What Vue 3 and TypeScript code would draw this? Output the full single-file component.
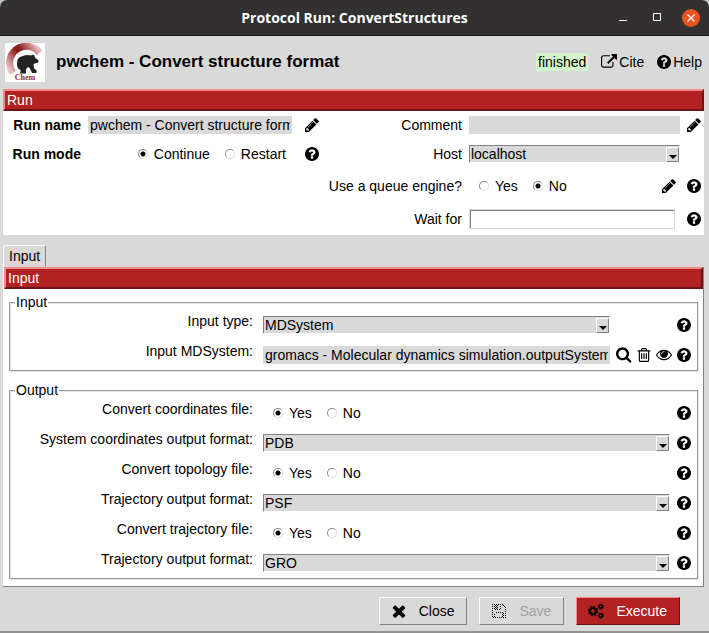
<script setup lang="ts">
import { reactive, ref } from 'vue'

interface FormRow {
  id: string
  label: string
  kind: 'choice' | 'select'
}

const icons = {
  help: 'M1024 1376v-192q0-14-9-23t-23-9h-192q-14 0-23 9t-9 23v192q0 14 9 23t23 9h192q14 0 23-9t9-23zm256-672q0-88-55.5-163t-138.5-116-170-41q-243 0-371 213-15 24 8 42l132 100q7 6 19 6 16 0 25-12 53-68 86-92 34-24 86-24 48 0 85.5 26t37.5 59q0 38-20 61t-68 45q-63 28-115.5 86.5t-52.5 125.5v36q0 14 9 23t23 9h192q14 0 23-9t9-23q0-19 21.5-49.5t54.5-49.5q32-18 49-28.5t46-35 44.5-48 28-60.5 12.5-81zm384 192q0 209-103 385.5t-279.5 279.5-385.5 103-385.5-103-279.5-279.5-103-385.5 103-385.5 279.5-279.5 385.5-103 385.5 103 279.5 279.5 103 385.5z',
  pencil: 'M491 1536l91-91-235-235-91 91v107h128v128h107zm523-928q0-22-22-22-10 0-17 7l-542 542q-7 7-7 17 0 22 22 22 10 0 17-7l542-542q7-7 7-17zm-54-192l416 416-832 832h-416v-416zm683 96q0 53-37 90l-166 166-416-416 166-165q36-38 90-38 53 0 91 38l235 234q37 39 37 91z',
  search: 'M1216 832q0-185-131.5-316.5t-316.5-131.5-316.5 131.5-131.5 316.5 131.5 316.5 316.5 131.5 316.5-131.5 131.5-316.5zm512 832q0 52-38 90t-90 38q-54 0-90-38l-343-342q-179 124-399 124-143 0-273.5-55.5t-225-150-150-225-55.5-273.5 55.5-273.5 150-225 225-150 273.5-55.5 273.5 55.5 225 150 150 225 55.5 273.5q0 220-124 399l343 343q37 37 37 90z',
  trash: 'M704 736v576q0 14-9 23t-23 9h-64q-14 0-23-9t-9-23v-576q0-14 9-23t23-9h64q14 0 23 9t9 23zm256 0v576q0 14-9 23t-23 9h-64q-14 0-23-9t-9-23v-576q0-14 9-23t23-9h64q14 0 23 9t9 23zm256 0v576q0 14-9 23t-23 9h-64q-14 0-23-9t-9-23v-576q0-14 9-23t23-9h64q14 0 23 9t9 23zm128 724v-948h-896v948q0 22 7 40.5t14.5 27 10.5 8.5h832q3 0 10.5-8.5t14.5-27 7-40.5zm-672-1076h448l-48-117q-7-9-17-11h-317q-10 2-17 11zm928 32v64q0 14-9 23t-23 9h-96v948q0 83-47 143.5t-113 60.5h-832q-66 0-113-58.5t-47-141.5v-952h-96q-14 0-23-9t-9-23v-64q0-14 9-23t23-9h309l70-167q15-37 54-63t79-26h320q40 0 79 26t54 63l70 167h309q14 0 23 9t9 23z',
  eye: 'M1664 960q-152-236-381-353 61 104 61 225 0 185-131.5 316.5t-316.5 131.5-316.5-131.5-131.5-316.5q0-121 61-225-229 117-381 353 133 205 333.5 326.5t434.5 121.5 434.5-121.5 333.5-326.5zm-720-384q0-20-14-34t-34-14q-125 0-214.5 89.5t-89.5 214.5q0 20 14 34t34 14 34-14 14-34q0-86 61-147t147-61q20 0 34-14t14-34zm848 384q0 34-20 69-140 230-376.5 368.5t-499.5 138.5-499.5-139-376.5-368q-20-35-20-69t20-69q140-229 376.5-368t499.5-139 499.5 139 376.5 368q20 35 20 69z',
  external: 'M1408 928v320q0 119-84.5 203.5t-203.5 84.5h-832q-119 0-203.5-84.5t-84.5-203.5v-832q0-119 84.5-203.5t203.5-84.5h704q14 0 23 9t9 23v64q0 14-9 23t-23 9h-704q-66 0-113 47t-47 113v832q0 66 47 113t113 47h832q66 0 113-47t47-113v-320q0-14 9-23t23-9h64q14 0 23 9t9 23zm384-864v512q0 26-19 45t-45 19-45-19l-176-176-652 652q-10 10-23 10t-23-10l-114-114q-10-10-10-23t10-23l652-652-176-176q-19-19-19-45t19-45 45-19h512q26 0 45 19t19 45z',
  times: 'M1490 1322q0 40-28 68l-136 136q-28 28-68 28t-68-28l-294-294-294 294q-28 28-68 28t-68-28l-136-136q-28-28-28-68t28-68l294-294-294-294q-28-28-28-68t28-68l136-136q28-28 68-28t68 28l294 294 294-294q28-28 68-28t68 28l136 136q28 28 28 68t-28 68l-294 294 294 294q28 28 28 68z',
  floppy: 'M512 1536h768v-384h-768v384zm896 0h128v-896q0-14-10-38.5t-20-34.5l-281-281q-10-10-34-20t-39-10v416q0 40-28 68t-68 28h-576q-40 0-68-28t-28-68v-416h-128v1280h128v-416q0-40 28-68t68-28h832q40 0 68 28t28 68v416zm-384-928v-320q0-13-9.5-22.5t-22.5-9.5h-192q-13 0-22.5 9.5t-9.5 22.5v320q0 13 9.5 22.5t22.5 9.5h192q13 0 22.5-9.5t9.5-22.5zm640 32v928q0 40-28 68t-68 28h-1344q-40 0-68-28t-28-68v-1344q0-40 28-68t68-28h928q40 0 88 20t76 48l280 280q28 28 48 76t20 88z',
}

const runName = ref('pwchem - Convert structure format')
const runMode = ref('Continue')
const comment = ref('')
const host = ref('localhost')
const useQueue = ref('No')
const waitFor = ref('')
const inputType = ref('MDSystem')
const inputSystem = ref('gromacs - Molecular dynamics simulation.outputSystem')

const outputRows: FormRow[] = [
  { id: 'convert-coords', label: 'Convert coordinates file:', kind: 'choice' },
  { id: 'coords-format', label: 'System coordinates output format:', kind: 'select' },
  { id: 'convert-topology', label: 'Convert topology file:', kind: 'choice' },
  { id: 'topology-format', label: 'Trajectory output format:', kind: 'select' },
  { id: 'convert-trajectory', label: 'Convert trajectory file:', kind: 'choice' },
  { id: 'trajectory-format', label: 'Trajectory output format:', kind: 'select' },
]

const values = reactive<Record<string, string>>({
  'convert-coords': 'Yes',
  'coords-format': 'PDB',
  'convert-topology': 'Yes',
  'topology-format': 'PSF',
  'convert-trajectory': 'Yes',
  'trajectory-format': 'GRO',
})
const formats = ['PDB', 'PSF', 'GRO']
</script>

<template>
  <div class="window">
    <div class="titlebar">
      <div class="titlebar-text">Protocol Run: ConvertStructures</div>
      <div class="window-controls">
        <button type="button" class="win-btn" aria-label="Minimize">
          <svg width="10" height="10" viewBox="0 0 10 10"><path d="M1 7.5h8" stroke="#fff" /></svg>
        </button>
        <button type="button" class="win-btn" aria-label="Maximize">
          <svg width="10" height="10" viewBox="0 0 10 10"><path d="M1.5 0.5h7v7h-7z" fill="none" stroke="#fff" /></svg>
        </button>
        <button type="button" class="win-btn win-close" aria-label="Close window">
          <svg width="18" height="18" viewBox="0 0 18 18"><path d="M5.5 5.5l7 7M12.5 5.5l-7 7" stroke="#fff" stroke-width="1.3" /></svg>
        </button>
      </div>
    </div>

    <header class="header">
      <svg class="logo" width="40" height="39" viewBox="0 0 40 39" role="img" aria-label="Chem">
        <defs>
          <linearGradient id="arc" gradientUnits="userSpaceOnUse" x1="7" y1="30" x2="36" y2="9">
            <stop offset="0" stop-color="#e9c3c4" />
            <stop offset="0.48" stop-color="#8a1519" />
            <stop offset="0.6" stop-color="#8f2226" />
            <stop offset="1" stop-color="#e6bfc0" />
          </linearGradient>
        </defs>
        <path d="M0 0h40v39H0z" fill="#fff" />
        <path d="M8 30A14.4 14.4 0 0 1 34.6 9.8" fill="none" stroke="url(#arc)" stroke-width="7" />
        <path d="M12 22Q11 14 18 13Q22 11 26 12.6L28 11.6L29.6 12.8L30 14.4L33.6 17.4L33.4 19.6L29.6 20.6Q28 21.4 28.6 22.6L29.2 25.6L31.8 27.8L31.4 30H27.2L24.2 24.6Q21.6 23.6 21 27L21 30.6H15.2L15.6 27Q12.4 26 12 22Z" fill="#222" />
        <text x="20" y="37" text-anchor="middle" class="logo-text">Chem</text>
      </svg>
      <h1 class="title">pwchem - Convert structure format</h1>
      <span class="status">finished</span>
      <a class="head-link" href="#cite">
        <svg width="16" height="16" viewBox="0 0 1792 1792"><path :d="icons.external" /></svg>Cite</a>
      <a class="head-link" href="#help">
        <svg width="14" height="14" viewBox="128 128 1536 1536"><path :d="icons.help" /></svg>Help</a>
    </header>

    <section class="run">
      <h2 class="bar">Run</h2>
      <div class="run-grid">
        <label class="lbl strong" for="run-name">Run name</label>
        <input id="run-name" v-model="runName" class="flat" type="text" />
        <button type="button" class="icon-btn" aria-label="Edit run name">
          <svg width="14" height="14" viewBox="128 128 1536 1536"><path :d="icons.pencil" /></svg>
        </button>
        <label class="lbl" for="comment">Comment</label>
        <input id="comment" v-model="comment" class="flat" type="text" />
        <button type="button" class="icon-btn" aria-label="Edit comment">
          <svg width="14" height="14" viewBox="128 128 1536 1536"><path :d="icons.pencil" /></svg>
        </button>

        <span id="mode-label" class="lbl strong">Run mode</span>
        <div class="choices choices-end" role="radiogroup" aria-labelledby="mode-label">
          <label v-for="m in ['Continue', 'Restart']" :key="m" class="choice">
            <input v-model="runMode" type="radio" name="run-mode" :value="m" />{{ m }}
          </label>
        </div>
        <button type="button" class="icon-btn" aria-label="Run mode help">
          <svg width="14" height="14" viewBox="128 128 1536 1536"><path :d="icons.help" /></svg>
        </button>
        <label class="lbl" for="host">Host</label>
        <div class="combo">
          <select id="host" v-model="host"><option>localhost</option></select>
          <span class="arrow"></span>
        </div>

        <span id="queue-label" class="lbl right-lbl">Use a queue engine?</span>
        <div class="queue">
          <div class="choices" role="radiogroup" aria-labelledby="queue-label">
            <label v-for="o in ['Yes', 'No']" :key="o" class="choice">
              <input v-model="useQueue" type="radio" name="queue" :value="o" />{{ o }}
            </label>
          </div>
          <button type="button" class="icon-btn" aria-label="Edit queue">
            <svg width="14" height="14" viewBox="128 128 1536 1536"><path :d="icons.pencil" /></svg>
          </button>
        </div>
        <button type="button" class="icon-btn" aria-label="Queue help">
          <svg width="14" height="14" viewBox="128 128 1536 1536"><path :d="icons.help" /></svg>
        </button>

        <label class="lbl right-lbl" for="wait-for">Wait for</label>
        <div class="wait"><input id="wait-for" v-model="waitFor" class="sunken" type="text" /></div>
        <button type="button" class="icon-btn" aria-label="Wait for help">
          <svg width="14" height="14" viewBox="128 128 1536 1536"><path :d="icons.help" /></svg>
        </button>
      </div>
    </section>

    <div class="tabs" role="tablist">
      <button type="button" class="tab" role="tab" aria-selected="true">Input</button>
    </div>

    <main class="panel">
      <h2 class="bar">Input</h2>
      <fieldset class="group">
        <legend>Input</legend>
        <div class="row">
          <label class="row-label" for="input-type">Input type:</label>
          <div class="control">
            <div class="combo">
              <select id="input-type" v-model="inputType"><option>MDSystem</option></select>
              <span class="arrow"></span>
            </div>
            <div class="actions"></div>
          </div>
          <button type="button" class="icon-btn" aria-label="Input type help">
            <svg width="14" height="14" viewBox="128 128 1536 1536"><path :d="icons.help" /></svg>
          </button>
        </div>
        <div class="row">
          <label class="row-label" for="input-system">Input MDSystem:</label>
          <div class="control">
            <input id="input-system" v-model="inputSystem" class="flat" type="text" />
            <div class="actions">
              <button type="button" class="icon-btn" aria-label="Search">
                <svg width="16" height="16" viewBox="64 96 1728 1728"><path :d="icons.search" /></svg>
              </button>
              <button type="button" class="icon-btn" aria-label="Delete">
                <svg width="14" height="14" viewBox="128 128 1536 1536"><path :d="icons.trash" /></svg>
              </button>
              <button type="button" class="icon-btn" aria-label="View">
                <svg width="16" height="16" viewBox="0 64 1792 1792"><path :d="icons.eye" /></svg>
              </button>
            </div>
          </div>
          <button type="button" class="icon-btn" aria-label="Input MDSystem help">
            <svg width="14" height="14" viewBox="128 128 1536 1536"><path :d="icons.help" /></svg>
          </button>
        </div>
      </fieldset>

      <fieldset class="group">
        <legend>Output</legend>
        <div v-for="row in outputRows" :key="row.id" class="row">
          <template v-if="row.kind === 'choice'">
            <span :id="row.id" class="row-label">{{ row.label }}</span>
            <div class="choices" role="radiogroup" :aria-labelledby="row.id">
              <label v-for="o in ['Yes', 'No']" :key="o" class="choice">
                <input v-model="values[row.id]" type="radio" :name="row.id" :value="o" />{{ o }}
              </label>
            </div>
          </template>
          <template v-else>
            <label class="row-label" :for="row.id">{{ row.label }}</label>
            <div class="combo">
              <select :id="row.id" v-model="values[row.id]">
                <option v-for="f in formats" :key="f">{{ f }}</option>
              </select>
              <span class="arrow"></span>
            </div>
          </template>
          <button type="button" class="icon-btn" :aria-label="row.label + ' help'">
            <svg width="14" height="14" viewBox="128 128 1536 1536"><path :d="icons.help" /></svg>
          </button>
        </div>
      </fieldset>
    </main>

    <footer class="footer">
      <button type="button" class="btn">
        <svg width="16" height="16" viewBox="128 128 1536 1536"><path :d="icons.times" /></svg>Close
      </button>
      <button type="button" class="btn" disabled>
        <svg width="16" height="16" viewBox="0 0 16 16" shape-rendering="crispEdges">
          <defs>
            <pattern id="stipple" width="2" height="2" patternUnits="userSpaceOnUse">
              <path d="M0 0h1v1H0zM1 1h1v1H1z" fill="#fff" />
            </pattern>
            <mask id="dots"><path d="M0 0h16v16H0z" fill="url(#stipple)" /></mask>
          </defs>
          <g mask="url(#dots)">
            <svg x="1" y="1" width="14" height="14" viewBox="128 128 1536 1536"><path :d="icons.floppy" /></svg>
          </g>
        </svg>Save
      </button>
      <button type="button" class="btn primary">
        <svg width="16" height="16" viewBox="0 0 16 16" fill="none" stroke="#000">
          <circle cx="5" cy="8" r="3.1" stroke-width="2.4" />
          <circle cx="5" cy="8" r="4.5" stroke-width="1.4" stroke-dasharray="1.77 1.77" />
          <circle cx="12.8" cy="3.6" r="1.7" stroke-width="1.5" />
          <circle cx="12.8" cy="3.6" r="2.7" stroke-width="1" stroke-dasharray="1.06 1.06" />
          <circle cx="12.8" cy="12.6" r="1.7" stroke-width="1.5" />
          <circle cx="12.8" cy="12.6" r="2.7" stroke-width="1" stroke-dasharray="1.06 1.06" />
        </svg>Execute
      </button>
    </footer>
  </div>
</template>

<style>
body {
  margin: 0;
  background: #c4c4c4;
}
</style>

<style scoped>
.window {
  display: flex;
  flex-direction: column;
  box-sizing: border-box;
  min-height: 100vh;
  background: #d9d9d9;
  border-bottom: 2px solid #929292;
  border-radius: 7px 7px 0 0;
  font: 14px/18px "Liberation Sans", Arial, sans-serif;
  color: #000;
}
button,
input,
select {
  font: inherit;
  color: inherit;
  margin: 0;
  border-radius: 0;
  box-sizing: border-box;
}
svg {
  display: block;
  flex: none;
}
.titlebar {
  display: grid;
  grid-template-columns: 1fr auto 1fr;
  align-items: center;
  box-sizing: border-box;
  height: 36px;
  background: #323031;
  border-bottom: 1px solid #1c1b1b;
  border-radius: 7px 7px 0 0;
  color: #fff;
}
.titlebar-text {
  grid-column: 2;
  font: bold 14px/20px "Open Sans", "Noto Sans", sans-serif;
}
.window-controls {
  display: flex;
  justify-content: flex-end;
  align-items: center;
  gap: 24px;
  padding-right: 9px;
}
.win-btn {
  display: flex;
  padding: 0;
  border: 0;
  background: none;
}
.window-controls .win-close {
  margin-left: -4px;
  background: #e95420;
  border-radius: 50%;
}
.header {
  display: flex;
  align-items: center;
  box-sizing: border-box;
  height: 53px;
  padding: 0 7px 1px 5px;
}
.logo-text {
  font: bold 8px "Liberation Serif", serif;
  fill: #a32024;
}
.title {
  flex: 1;
  margin: 0 0 0 11px;
  font-size: 17px;
  line-height: 20px;
}
.status {
  padding: 0 2px;
  background: #d2f5cb;
}
.head-link {
  display: flex;
  align-items: center;
  gap: 2px;
  margin-left: 13px;
  color: inherit;
  text-decoration: none;
}
.bar {
  box-sizing: border-box;
  height: 22px;
  margin: 0;
  padding: 0 2px;
  border: 2px solid;
  border-color: #f28b8b #6b1414 #6b1414 #f28b8b;
  background: #b22222;
  color: #fff;
  font-size: 14px;
  font-weight: normal;
  line-height: 18px;
}
.run {
  margin: 0 5px 0 3px;
  background: #fff;
}
.run-grid {
  display: grid;
  grid-template-columns: 78px minmax(0, 29fr) 20px 136px minmax(0, 30fr) 14px;
  grid-template-rows: 28px 30px 34px 32px;
  column-gap: 7px;
  align-items: center;
  padding-right: 3px;
}
.lbl {
  text-align: right;
  white-space: nowrap;
}
.strong {
  font-weight: bold;
}
.right-lbl {
  grid-column: 4;
}
.flat {
  flex: 1;
  width: 100%;
  min-width: 0;
  height: 18px;
  padding: 0 2px;
  border: 0;
  background: #d9d9d9;
}
.sunken {
  width: 100%;
  height: 20px;
  padding: 0 2px;
  border: 1px solid #d9d9d9;
  background: #fff;
  box-shadow: inset 1px 1px 0 #828282;
}
.wait {
  padding-right: 5px;
}
.queue {
  display: flex;
  align-items: center;
  justify-content: space-between;
  padding-right: 4px;
}
.icon-btn {
  display: flex;
  justify-content: flex-end;
  padding: 0;
  border: 0;
  background: none;
}
.choices {
  display: flex;
  gap: 15px;
  padding-left: 10px;
}
.choices-end {
  justify-content: flex-end;
  padding-right: 6px;
}
.choice {
  display: flex;
  align-items: center;
  gap: 6px;
}
.choice input {
  appearance: none;
  width: 10px;
  height: 10px;
  border: 1px solid;
  border-color: #8c8c8c #dedede #dedede #8c8c8c;
  border-radius: 50%;
  background: #fff;
}
.choice input:checked {
  background: radial-gradient(circle, #000 2px, #fff 3px);
}
.combo {
  position: relative;
  flex: 1;
  min-width: 0;
}
.combo select {
  appearance: none;
  display: block;
  width: 100%;
  height: 18px;
  padding: 0 16px 0 1px;
  border: 1px solid;
  border-color: #828282 #fff #fff #828282;
  background: #d9d9d9;
  line-height: 16px;
}
.arrow {
  position: absolute;
  top: 2px;
  right: 1px;
  width: 13px;
  height: 15px;
  box-sizing: border-box;
  border: 1px solid;
  border-color: #fff #828282 #828282 #fff;
  background: #d9d9d9;
  pointer-events: none;
}
.arrow::after {
  content: "";
  position: absolute;
  top: 7px;
  left: 2px;
  border: 4px solid transparent;
  border-top-color: #000;
  border-bottom: 0;
}
.tabs {
  display: flex;
  margin-top: 10px;
  padding-left: 3px;
}
.tab {
  height: 22px;
  padding: 0 5px;
  border: 1px solid;
  border-color: #fff #828282 transparent #fff;
  border-radius: 3px 3px 0 0;
  background: #d9d9d9;
}
.panel {
  flex: 1;
  margin: 0 5px 0 3px;
  padding-bottom: 7px;
  border: solid #828282;
  border-width: 0 1px 1px 0;
  background: #fff;
}
.panel .bar {
  margin: 0 0 5px 1px;
}
.group {
  min-width: 0;
  margin: 0 5px 11px 6px;
  padding: 0 6px 0 0;
  border: 1px solid #999;
  box-shadow: inset 1px 1px 0 #e6e6e6, 1px 1px 0 #e6e6e6;
}
.group:last-child {
  margin-bottom: 0;
}
.group legend {
  margin-left: 5px;
  padding: 0 1px;
  background: #fff;
  line-height: 16px;
}
.row {
  display: grid;
  grid-template-columns: 243px minmax(0, 1fr) 14px;
  align-items: center;
  height: 30px;
}
.row > :nth-child(2) {
  margin: 0 7px 0 10px;
}
.row-label {
  padding-bottom: 8px;
  text-align: right;
}
.control {
  display: flex;
  align-items: center;
}
.actions {
  display: flex;
  align-items: center;
  gap: 5px;
  box-sizing: border-box;
  width: 60px;
  padding-left: 6px;
}
.footer {
  display: flex;
  justify-content: flex-end;
  gap: 12px;
  padding: 10px 29px 6px;
}
.btn {
  display: flex;
  align-items: center;
  gap: 12px;
  height: 28px;
  padding: 0 12px 0 11px;
  border: 1px solid;
  border-color: #fff #828282 #828282 #fff;
  background: #d9d9d9;
}
.btn:disabled {
  color: #a3a3a3;
}
.primary {
  border-color: #f28b8b #6b1414 #6b1414 #f28b8b;
  background: #b22222;
  color: #fff;
}
</style>
